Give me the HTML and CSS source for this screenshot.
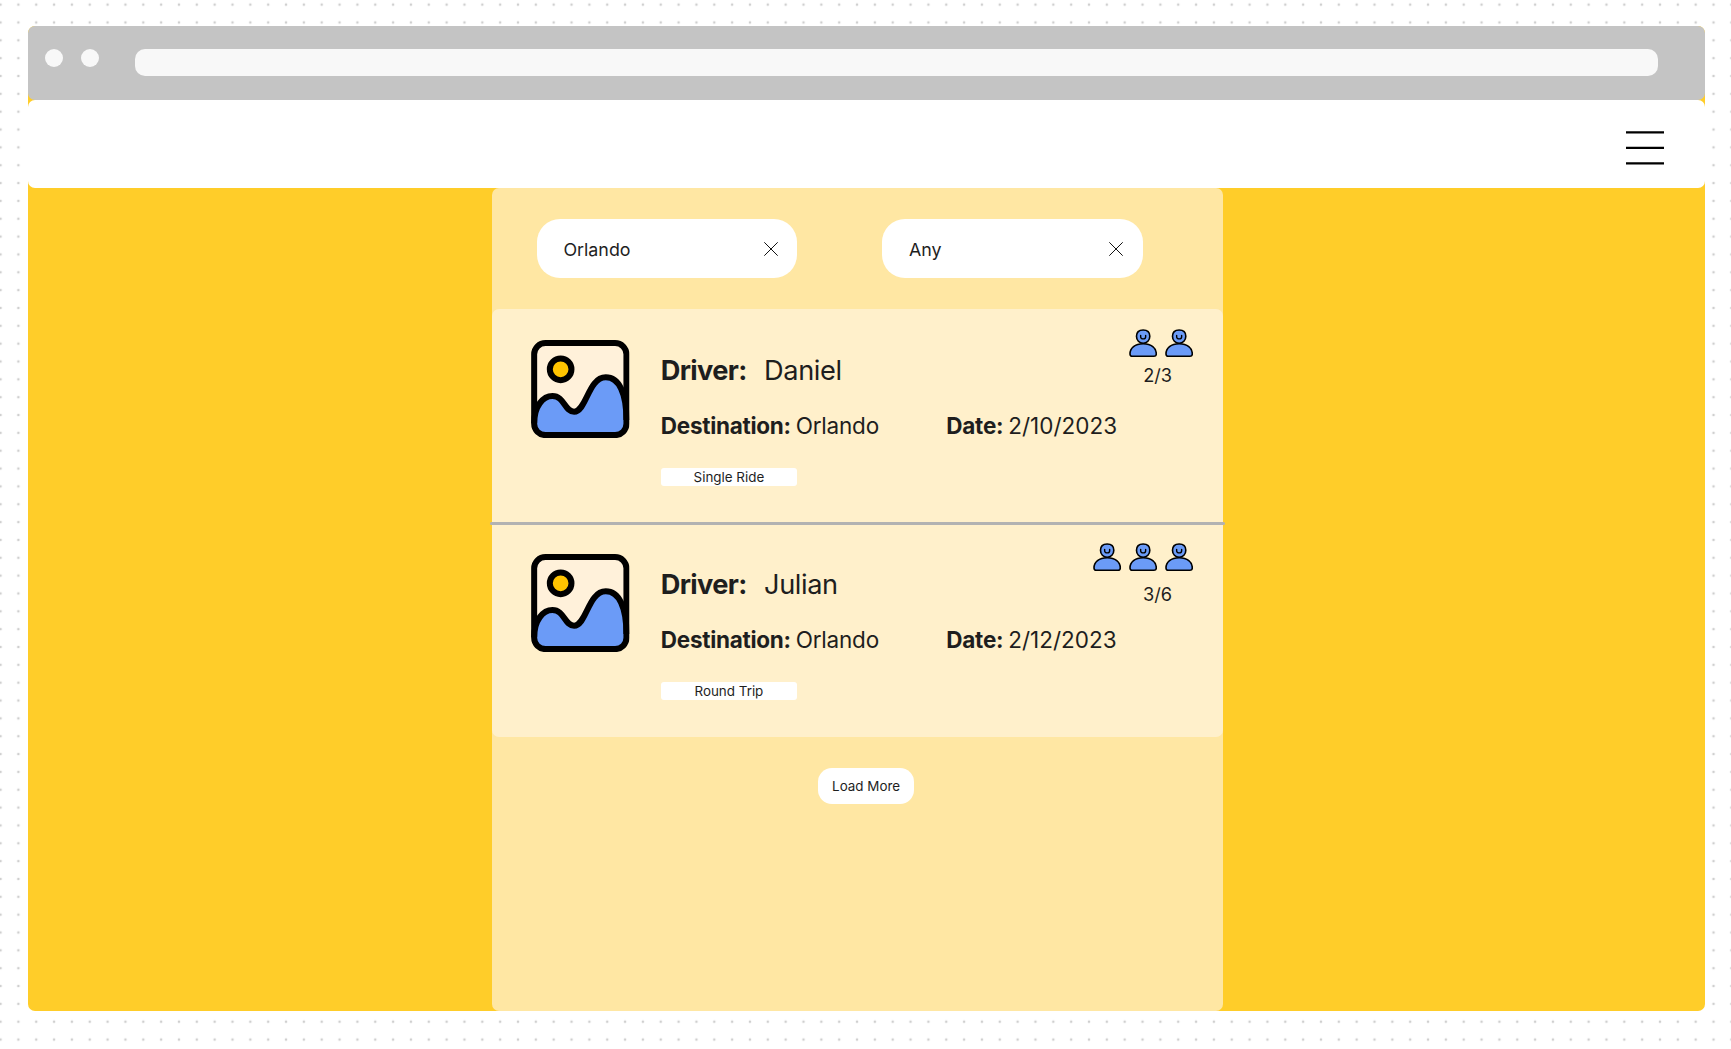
FILE: index.html
```html
<!DOCTYPE html>
<html lang="en">
<head>
<meta charset="utf-8">
<title>Rides to Orlando</title>
<link rel="stylesheet" href="styles.css">
</head>
<body>
<svg class="symbols" aria-hidden="true">
  <symbol id="picture" viewBox="33.5 30 296 295">
    <rect x="43" y="39" width="277" height="276.5" rx="34" fill="#fff1da"/>
    <path d="M43 280C43 228 70 198 98 198C134 198 134 245 163 245C200 245 205 142 258 142C298 142 320 190 320 270V282Q320 315.500 286 315.500H77Q43 315.500 43 282Z" fill="#6b9bf7"/>
    <path d="M43 280C43 228 70 198 98 198C134 198 134 245 163 245C200 245 205 142 258 142C298 142 320 190 320 270" fill="none" stroke="#000" stroke-width="18"/>
    <rect x="43" y="39" width="277" height="276.5" rx="34" fill="none" stroke="#000" stroke-width="18"/>
    <circle cx="122.500" cy="118" r="32.500" fill="#ffc400" stroke="#000" stroke-width="18"/>
  </symbol>
  <symbol id="person" viewBox="0 0 85 85">
    <path d="M3 75C3 57 18 44.500 42.500 44.500S82 57 82 75Q82 82 75 82H10Q3 82 3 75Z" fill="#6b9bf7" stroke="#000" stroke-width="4.800"/>
    <path d="M22.500 22C22.500 9 30 3 42.500 3S62.500 9 62.500 22C62.500 34 54 43 42.500 43S22.500 34 22.500 22Z" fill="#6b9bf7" stroke="#000" stroke-width="4.800"/>
    <path d="M35 19V23C35 32 50 32 50 23V19" fill="none" stroke="#000" stroke-width="4.200" stroke-linecap="round"/>
  </symbol>
  <symbol id="close" viewBox="0 0 14 14">
    <path d="M.3 .3L13.700 13.700M13.700 .3L.3 13.700" fill="none" stroke="#111" stroke-width="1"/>
  </symbol>
</svg>
<div class="window">
  <div class="titlebar">
    <span class="dot"></span>
    <span class="dot"></span>
    <div class="address"></div>
  </div>
  <nav class="nav">
    <svg class="menu" viewBox="0 0 38 34"><path d="M0 1.400H38M0 16.800H38M0 32.400H38" stroke="#000" stroke-width="2.200"/></svg>
  </nav>
  <main class="panel">
    <div class="filters">
      <div class="filter"><span>Orlando</span><svg class="close"><use href="#close"/></svg></div>
      <div class="filter"><span>Any</span><svg class="close"><use href="#close"/></svg></div>
    </div>
    <div class="rides">
      <article class="ride">
        <svg class="picture"><use href="#picture"/></svg>
        <div class="details">
          <div class="driver"><b>Driver:</b><span>Daniel</span></div>
          <div class="trip">
            <div class="field destination"><b>Destination:</b><span>Orlando</span></div>
            <div class="field date"><b>Date:</b><span>2/10/2023</span></div>
          </div>
          <div class="tag">Single Ride</div>
        </div>
        <div class="riders">
          <div class="people">
            <svg class="person"><use href="#person"/></svg>
            <svg class="person"><use href="#person"/></svg>
          </div>
          <div class="count">2/3</div>
        </div>
      </article>
      <article class="ride">
        <svg class="picture"><use href="#picture"/></svg>
        <div class="details">
          <div class="driver"><b>Driver:</b><span>Julian</span></div>
          <div class="trip">
            <div class="field destination"><b>Destination:</b><span>Orlando</span></div>
            <div class="field date"><b>Date:</b><span>2/12/2023</span></div>
          </div>
          <div class="tag">Round Trip</div>
        </div>
        <div class="riders riders-spaced">
          <div class="people">
            <svg class="person"><use href="#person"/></svg>
            <svg class="person"><use href="#person"/></svg>
            <svg class="person"><use href="#person"/></svg>
          </div>
          <div class="count">3/6</div>
        </div>
      </article>
    </div>
    <button class="load">Load More</button>
  </main>
</div>
</body>
</html>
```
FILE: styles.css
```css
* { box-sizing: border-box; }

body {
  margin: 0;
  height: 1049px;
  padding: 26px 25.7px 37.3px 27.6px;
  overflow: hidden;
  background: #fff radial-gradient(circle at center, #cfcfcf 0.9px, transparent 1.7px) -8.4px -4.3px / 17.846px 17.846px;
  font-family: Inter, sans-serif;
  color: #1e1e1e;
}

svg { display: block; }
.symbols { position: absolute; width: 0; height: 0; }

.window {
  display: flex;
  flex-direction: column;
  height: 985.4px;
  border-radius: 7px;
  background: #ffcd29;
}

.titlebar {
  display: flex;
  align-items: flex-start;
  height: 74px;
  padding: 23.3px 47px 0 17.6px;
  border-radius: 7px;
  background: #c4c4c4;
}
.dot {
  width: 18px;
  height: 18px;
  margin-right: 17.8px;
  border-radius: 50%;
  background: #f8f8f8;
}
.address {
  flex: 1;
  height: 27px;
  margin-left: 18px;
  border-radius: 10px;
  background: #f8f8f8;
}

.nav {
  display: flex;
  justify-content: flex-end;
  height: 88px;
  padding: 31px 41.3px 0 0;
  border-radius: 7px;
  background: #fff;
}
.menu { width: 38px; height: 34px; }

.panel {
  display: flex;
  flex-direction: column;
  flex: 1;
  width: 731.4px;
  margin-left: 464.1px;
  border-radius: 7px;
  background: #ffe7a3;
}

.filters {
  display: flex;
  gap: 84.8px;
  padding: 31px 0 31.3px 44.9px;
}
.filter {
  display: flex;
  align-items: center;
  justify-content: space-between;
  width: 260.8px;
  height: 59px;
  padding: 0 19.6px 0 26.8px;
  border-radius: 23px;
  background: #fff;
  font-size: 17.85px;
  line-height: 22px;
}
.filter span { padding-top: 2px; }
.filter + .filter { padding-right: 20.4px; }
.close { width: 14px; height: 14px; }

.rides {
  position: relative;
  border-radius: 7px;
  background: #fff0cb;
}
.rides::after {
  content: "";
  position: absolute;
  top: 212.7px;
  left: -1.5px;
  right: -1.8px;
  height: 3px;
  border-radius: 2px;
  background: #b2b2b2;
}

.ride {
  display: grid;
  grid-template-columns: 98.6px 1fr auto;
  align-items: start;
  height: 214px;
  padding: 0 29.8px 0 39.3px;
  column-gap: 31.2px;
}
.picture { width: 98.6px; height: 98.3px; margin-top: 30.4px; }

.details {
  grid-column: 2 / 4;
  grid-row: 1;
  padding-top: 45.4px;
}
.driver {
  display: flex;
  gap: 17.4px;
  font-size: 27.2px;
  line-height: 32px;
  letter-spacing: -0.4px;
}
.driver b { letter-spacing: -0.65px; }
.trip {
  display: flex;
  margin-top: 25.1px;
  font-size: 22.5px;
  line-height: 28px;
  letter-spacing: -0.2px;
}
.field { display: flex; gap: 4.8px; }
.destination { width: 285.4px; }
.destination b { letter-spacing: -0.27px; }
.date span { letter-spacing: 0; }
.tag {
  width: 136.3px;
  height: 18px;
  margin-top: 28.4px;
  border-radius: 3px;
  background: #fff;
  font-size: 13.4px;
  line-height: 18px;
  text-align: center;
}

.riders {
  display: flex;
  flex-direction: column;
  align-items: flex-end;
  gap: 6.2px;
  grid-column: 3;
  grid-row: 1;
  padding-top: 20.2px;
}
.riders-spaced { gap: 11px; }
.people { display: flex; gap: 7.5px; }
.person { width: 28.3px; height: 28.3px; }
.count {
  width: 71.4px;
  font-size: 18.2px;
  line-height: 22px;
  text-align: center;
}

.load {
  align-self: flex-start;
  width: 96px;
  height: 36px;
  margin: 31px 0 0 326.4px;
  padding: 0 0 1px;
  border: 0;
  border-radius: 14px;
  background: #fff;
  color: #1e1e1e;
  font: 13.4px/18px Inter, sans-serif;
}
```
